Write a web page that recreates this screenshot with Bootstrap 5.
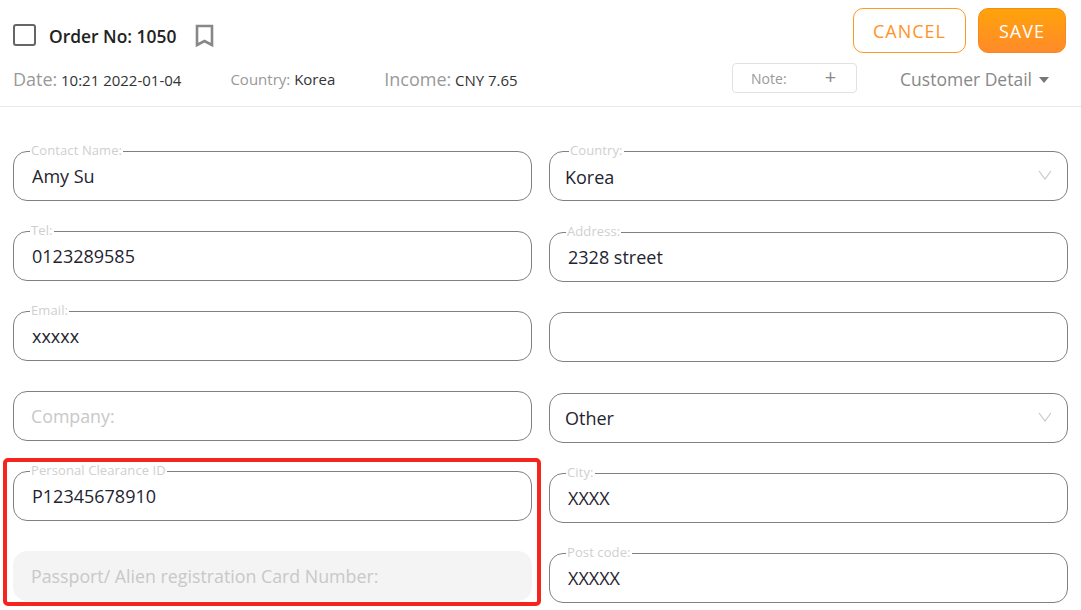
<!DOCTYPE html>
<html lang="en">
<head>
<meta charset="utf-8">
<title>Order 1050</title>
<link rel="stylesheet" href="https://cdn.jsdelivr.net/npm/bootstrap@5.3.0/dist/css/bootstrap.min.css">
<style>
html,body{height:610px;overflow:hidden;background:#fff;font-family:"Open Sans",sans-serif;color:#222}
.top-area{height:107px;border-bottom:1px solid #e9e9e9;padding:8px 13px 0 13px;position:relative}
.row-one{height:45px}
.tick-box{width:23px;height:22px;border:2px solid #666;border-radius:3px;margin-top:2px}
.order-no{font-size:17.4px;font-weight:600;color:#222;margin-left:13px;line-height:24px;margin-top:1px}
.mark-icon{margin-left:19px;margin-top:5px;display:block}
.act-btn{height:45px;font-size:18px;letter-spacing:1px;border-radius:10px;font-family:"Open Sans",sans-serif;padding:2px 0 0}
.act-cancel{width:113px;background:#fff;border:1px solid #ff9a1f;color:#ff9326}
.act-save{width:88px;margin-left:12px;margin-right:2px;background:linear-gradient(180deg,#ffa30a,#ff8a2a);border:1px solid #f98a18;color:#fff}
.row-two{margin-top:10px;height:30px}
.meta-a{font-size:18px;color:#999;word-spacing:-1px;padding-top:2px}
.meta-b{font-size:15px;color:#999;padding-top:2px}
.meta-v{font-size:15px;color:#333;word-spacing:0}
.meta-gap{margin-left:49px}
.note-box{width:125px;height:30px;border:1px solid #e2e2e2;border-radius:4px;font-size:14px;color:#999;padding-left:18px;padding-right:20px}
.note-plus{font-size:20px;line-height:1;color:#888;margin-top:-3px}
.cust-det{font-size:17.5px;color:#888;margin-left:43px;margin-right:19px;padding-top:2px}
.cust-caret{width:0;height:0;border-left:5px solid transparent;border-right:5px solid transparent;border-top:6px solid #777;margin-left:7px;margin-top:1px}
.form-area{padding:44px 13px 0 13px;gap:17px}
.form-col{width:519px;flex:none}
.fld{position:relative;height:50px}
.fld-gap{margin-bottom:30px}
.fld-gap-l{margin-bottom:31px}
.fld-gap-s{margin-bottom:30px}
.fld-lab{position:absolute;left:17px;top:-10px;font-size:13px;line-height:18px;letter-spacing:.1px;background:#fff;color:#cfcfcf;padding:0 1px;z-index:2}
.fld-lab-sel{left:20px}
.fld .form-control,.fld .form-select{height:50px;border:1px solid #808080;border-radius:14px;font-size:18px;color:#1f2430;font-family:"Open Sans",sans-serif;padding:0 18px;box-shadow:none}
.fld .form-select{padding:2px 40px 0 15px;background-image:none}
.fld .form-select.sel-up{padding-top:0}
.fld .form-control:placeholder-shown{padding-left:17px}
.fld .form-control::placeholder{color:#c8c8c8;opacity:1;font-size:17.8px}
.fld .form-control:disabled{background:#f4f4f4;border-color:#f4f4f4}
.sel-chev{position:absolute;right:16px;top:19px;pointer-events:none}
.red-frame{position:absolute;left:3px;top:458px;width:538px;height:148px;border:4px solid #f5241c;border-radius:5px;pointer-events:none;z-index:3}
</style>
</head>
<body>
<header class="top-area">
  <div class="row-one d-flex align-items-start">
    <span class="tick-box mt-3"></span>
    <span class="order-no mt-3">Order No: 1050</span>
    <svg class="mark-icon mt-3" width="20" height="24" viewBox="0 0 20 24" fill="none" stroke="#888" stroke-width="2.6"><path d="M2 2h15v19l-7.500-4-7.500 4z"/></svg>
    <div class="ms-auto d-flex">
      <button type="button" class="btn act-btn act-cancel">CANCEL</button>
      <button type="button" class="btn act-btn act-save">SAVE</button>
    </div>
  </div>
  <div class="row-two d-flex align-items-center">
    <span class="meta-a">Date: <span class="meta-v">10:21 2022-01-04</span></span>
    <span class="meta-b meta-gap">Country: <span class="meta-v">Korea</span></span>
    <span class="meta-a meta-gap">Income: <span class="meta-v">CNY 7.65</span></span>
    <div class="note-box ms-auto d-flex align-items-center justify-content-between"><span>Note:</span><span class="note-plus">+</span></div>
    <div class="cust-det d-flex align-items-center">Customer Detail<span class="cust-caret"></span></div>
  </div>
</header>
<main class="form-area d-flex">
  <div class="form-col">
    <div class="fld fld-gap"><label class="fld-lab">Contact Name:</label><input class="form-control" value="Amy Su"></div>
    <div class="fld fld-gap"><label class="fld-lab">Tel:</label><input class="form-control" value="0123289585"></div>
    <div class="fld fld-gap"><label class="fld-lab">Email:</label><input class="form-control" value="xxxxx"></div>
    <div class="fld fld-gap"><input class="form-control" placeholder="Company:"></div>
    <div class="fld fld-gap"><label class="fld-lab">Personal Clearance ID</label><input class="form-control" value="P12345678910"></div>
    <div class="fld"><input class="form-control" placeholder="Passport/ Alien registration Card Number:" disabled></div>
  </div>
  <div class="form-col">
    <div class="fld fld-gap-l"><label class="fld-lab fld-lab-sel">Country:</label><select class="form-select"><option>Korea</option></select><svg class="sel-chev" width="14" height="10" viewBox="0 0 14 10" fill="none" stroke="#c8c8c8" stroke-width="1.2"><path d="M1 1l6 8 6-8"/></svg></div>
    <div class="fld fld-gap-s"><label class="fld-lab">Address:</label><input class="form-control" value="2328 street"></div>
    <div class="fld fld-gap-l"><input class="form-control"></div>
    <div class="fld fld-gap-s"><select class="form-select sel-up"><option>Other</option></select><svg class="sel-chev" width="14" height="10" viewBox="0 0 14 10" fill="none" stroke="#c8c8c8" stroke-width="1.2"><path d="M1 1l6 8 6-8"/></svg></div>
    <div class="fld fld-gap-s"><label class="fld-lab">City:</label><input class="form-control" value="XXXX"></div>
    <div class="fld"><label class="fld-lab">Post code:</label><input class="form-control" value="XXXXX"></div>
  </div>
</main>
<div class="red-frame"></div>
</body>
</html>
